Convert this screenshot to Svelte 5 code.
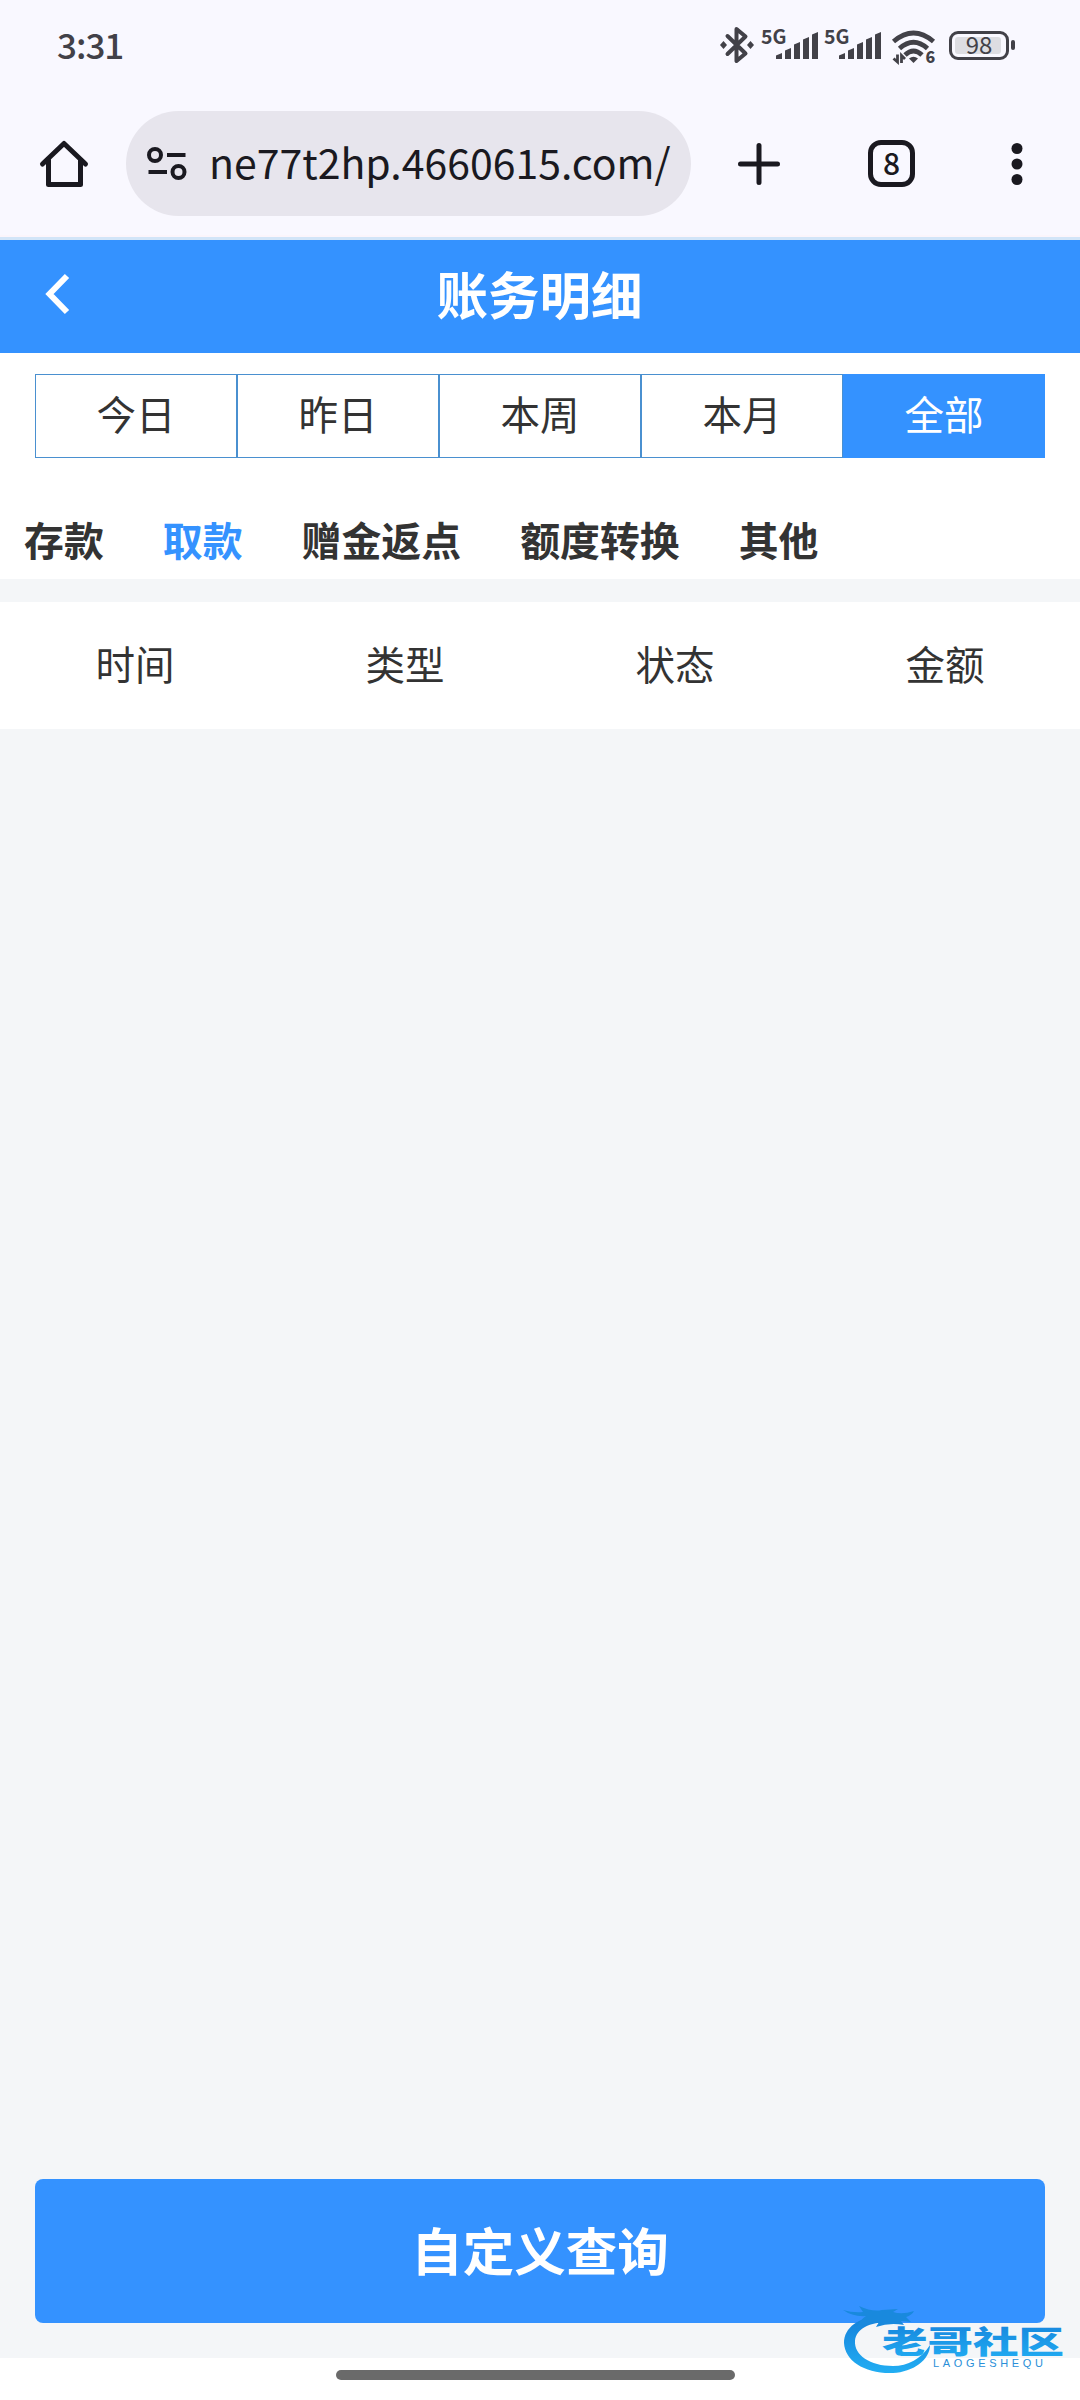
<script>
	let range = $state("全部");
	let category = $state("取款");

	const ranges = ["今日", "昨日", "本周", "本月", "全部"];
	const categories = ["存款", "取款", "赠金返点", "额度转换", "其他"];
	const columns = ["时间", "类型", "状态", "金额"];

	// Left edge and top of each signal bar, the bottom is shared
	const bars = [
		[14, 24],
		[23, 19],
		[32, 13],
		[41, 8],
		[50, 3],
	];
</script>

{#snippet signal()}
	<svg class="signal" width="58" height="32" viewBox="0 0 58 32">
		<text x="-1" y="15" class="net">5G</text>
		{#each bars as [x, y]}
			<path d="M{x} {y + 2.5}L{x + 6} {y}V30H{x}Z" />
		{/each}
	</svg>
{/snippet}

<div class="screen">
	<div class="status">
		<span class="clock">3:31</span>
		<div class="status-icons">
			<svg class="bt" width="34" height="38" viewBox="0 0 34 38">
				<path
					d="M7.5 10L25.5 27.5L16.5 35V3L25.5 10.5L7.5 28"
					class="line"
				/>
				<path d="M3.5 15L7 19L3.5 23L0 19ZM30.5 15L34 19L30.5 23L27 19Z" />
			</svg>
			{@render signal()}
			{@render signal()}
			<svg class="wifi" width="44" height="34" viewBox="0 0 44 34">
				<path d="M1.5 11.5Q21.5 -5.5 41.5 11.5" class="arc" />
				<path d="M7.5 18.5Q21.5 6 35.5 18.5" class="arc" />
				<path d="M13 25Q21.5 17 30 25" class="arc" />
				<path d="M17 28.5Q21.5 25 26 28.5L21.5 33Z" />
				<path d="M5.5 24.5V32L1.500 28.5M9.500 33V25.500L13 29" class="arrows" />
				<text x="33.500" y="33" class="gen">6</text>
			</svg>
			<svg class="battery" width="67" height="30" viewBox="0 0 67 30">
				<rect x="1.5" y="2.5" width="57" height="26" rx="7.5" class="shell" />
				<rect x="6" y="7" width="46" height="17" rx="3" class="charge" />
				<rect x="62" y="10" width="4" height="10" rx="2" />
				<text x="30" y="24" class="percent">98</text>
			</svg>
		</div>
	</div>

	<div class="browser">
		<svg class="home" width="48" height="48" viewBox="0 0 48 48">
			<path d="M2.5 24L24 3.5L45.5 24M8.500 20V44.5H40.500V20" />
		</svg>
		<div class="address">
			<svg width="40" height="34" viewBox="0 0 40 34">
				<circle cx="8" cy="8" r="6" />
				<circle cx="31.5" cy="25" r="6" />
				<path d="M20 8H38.5M1.5 25H20" />
			</svg>
			<span class="url">ne77t2hp.4660615.com/</span>
		</div>
		<svg class="plus" width="42" height="42" viewBox="0 0 42 42">
			<path d="M21 2.5V39.5M2.5 21H39.5" />
		</svg>
		<div class="tabs-count">8</div>
		<svg class="dots" width="12" height="44" viewBox="0 0 12 44">
			<circle cx="6" cy="6.5" r="5.5" />
			<circle cx="6" cy="22" r="5.5" />
			<circle cx="6" cy="37.5" r="5.5" />
		</svg>
	</div>

	<header>
		<svg class="back" width="26" height="42" viewBox="0 0 26 42">
			<path d="M22 3L4.5 21L22 39" />
		</svg>
		<h1>账务明细</h1>
	</header>

	<div class="filters">
		<div class="ranges">
			{#each ranges as item}
				<button class:active={item === range} onclick={() => (range = item)}>
					{item}
				</button>
			{/each}
		</div>
		<nav>
			{#each categories as item}
				<button
					class:active={item === category}
					onclick={() => (category = item)}
				>
					{item}
				</button>
			{/each}
		</nav>
	</div>

	<div class="columns">
		{#each columns as column}
			<span>{column}</span>
		{/each}
	</div>

	<main></main>

	<div class="footer">
		<button class="query">自定义查询</button>
	</div>
	<div class="gesture"><i></i></div>

	<svg class="mark" width="236" height="80" viewBox="836 2300 236 80">
		<defs>
			<linearGradient id="ink" x1="0" y1="0" x2="0" y2="1">
				<stop offset="0" stop-color="#1580da" />
				<stop offset="1" stop-color="#22aef3" />
			</linearGradient>
		</defs>
		<path
			d="M890 2317C862 2314 844 2326 844 2343C845 2361 865 2374 893 2373C913 2372 930 2360 930 2345C921 2359 908 2366 893 2366C870 2366 854 2355 855 2341C856 2329 869 2322 890 2322Z"
			fill="url(#ink)"
		/>
		<path
			d="M843 2310Q853 2313 863 2312L859 2306Q872 2312 882 2310L898 2309L893 2312Q902 2315 914 2311Q912 2315 906 2317L911 2322L901 2321L904 2325Q890 2322 876 2327L879 2322Q864 2324 855 2331Q859 2320 866 2316Q853 2317 843 2310Z"
			fill="#1989dd"
		/>
		<text
			x="882"
			y="2353"
			class="brand"
			textLength="182"
			lengthAdjust="spacingAndGlyphs">老哥社区</text
		>
		<text
			x="933"
			y="2367"
			class="latin"
			textLength="110"
			lengthAdjust="spacing">LAOGESHEQU</text
		>
	</svg>
</div>

<style>
	:global(body) {
		background: #fff;
	}

	.screen {
		position: relative;
		display: flex;
		flex-direction: column;
		width: 1080px;
		height: 2400px;
		overflow: hidden;
		background: #f4f6f8;
		color: #333;
		font-family: "Noto Sans CJK SC", "Noto Sans", sans-serif;
	}

	button {
		border: none;
		background: none;
		padding: 0;
		font: inherit;
		color: inherit;
		white-space: nowrap;
	}

	svg {
		flex: none;
		display: block;
		overflow: visible;
	}

	.status {
		display: flex;
		justify-content: space-between;
		height: 92px;
		padding: 0 64px 0 57px;
		background: #f9f8ff;
		color: #424148;
	}

	.clock {
		font-size: 35px;
		font-weight: 500;
		line-height: 88px;
		letter-spacing: -1px;
	}

	.status-icons {
		display: flex;
		align-items: flex-start;
		padding-top: 26px;
		fill: #424148;
	}

	.bt {
		margin-right: 1px;
	}

	.bt .line {
		fill: none;
		stroke: #424148;
		stroke-width: 4;
		stroke-linejoin: round;
		stroke-linecap: round;
	}

	.signal {
		margin: 3px -2px 0 7px;
	}

	.net {
		font-size: 19.5px;
		font-weight: 700;
	}

	.wifi {
		margin: 4px 0 0 11px;
	}

	.arc {
		fill: none;
		stroke: #424148;
		stroke-width: 4.8;
	}

	.arrows {
		fill: none;
		stroke: #424148;
		stroke-width: 2.8;
	}

	.gen {
		font-size: 16px;
		font-weight: 900;
	}

	.battery {
		margin: 4px 0 0 13px;
	}

	.shell {
		fill: none;
		stroke: #424148;
		stroke-width: 3;
	}

	.charge {
		fill: #dddde2;
	}

	.percent {
		font-size: 24px;
		text-anchor: middle;
	}

	.browser {
		display: flex;
		align-items: center;
		height: 145px;
		padding: 0 56px 0 40px;
		box-sizing: border-box;
		background: #f9f8ff;
		border-bottom: 2px solid #fbf5fb;
		color: #1a1920;
	}

	.browser path {
		fill: none;
		stroke: #1a1920;
		stroke-width: 5;
		stroke-linecap: round;
		stroke-linejoin: round;
	}

	.address {
		display: flex;
		align-items: center;
		width: 565px;
		height: 105px;
		margin-left: 38px;
		padding-left: 21px;
		border-radius: 53px;
		box-sizing: border-box;
		background: #e7e5ed;
	}

	.browser .address path {
		stroke-width: 4;
		stroke-linecap: butt;
	}

	.address circle {
		fill: none;
		stroke: #1a1920;
		stroke-width: 4;
	}

	.url {
		margin-left: 22px;
		padding-bottom: 5px;
		font-size: 41px;
		line-height: 60px;
	}

	.plus {
		margin-left: 47px;
	}

	.tabs-count {
		width: 47px;
		height: 47px;
		margin-left: 88px;
		box-sizing: border-box;
		border: 5px solid #1a1920;
		border-radius: 13px;
		font-size: 30px;
		font-weight: 500;
		line-height: 34px;
		text-align: center;
	}

	.dots {
		margin-left: 96px;
		fill: #1a1920;
	}

	header {
		display: flex;
		align-items: flex-start;
		height: 113px;
		padding: 0 45px;
		border-top: 3px solid #d2e5f8;
		background: #3492ff;
		color: #fff;
	}

	.back {
		margin-top: 33px;
	}

	.back path {
		fill: none;
		stroke: #fff;
		stroke-width: 6;
	}

	h1 {
		flex: 1;
		margin: 0 27px 0 0;
		font-size: 51.5px;
		font-weight: 700;
		line-height: 105px;
		text-align: center;
	}

	.filters {
		height: 226px;
		background: #fff;
	}

	.ranges {
		display: flex;
		padding: 21px 35px 0;
	}

	.ranges button {
		flex: 1;
		height: 84px;
		padding-bottom: 6px;
		border: 1px solid #4a90d0;
		font-size: 39.5px;
		line-height: 76px;
	}

	.ranges .active {
		background: #3492ff;
		border-color: #3492ff;
		color: #fff;
	}

	nav {
		display: flex;
		gap: 59px;
		padding: 51px 24px 0;
		font-size: 39.9px;
		font-weight: 700;
		line-height: 60px;
	}

	nav .active {
		color: #3492ff;
	}

	.columns {
		display: grid;
		grid-template-columns: repeat(4, 1fr);
		height: 127px;
		margin-top: 23px;
		background: #fff;
		font-size: 39.5px;
		line-height: 122px;
		text-align: center;
	}

	main {
		flex: 1;
	}

	.footer {
		padding: 0 35px 35px;
	}

	.query {
		display: block;
		width: 1010px;
		height: 144px;
		padding-bottom: 5px;
		border-radius: 8px;
		background: #3492ff;
		color: #fff;
		font-size: 51.5px;
		font-weight: 700;
		line-height: 138px;
	}

	.gesture {
		height: 42px;
		background: #fff;
	}

	.gesture i {
		display: block;
		width: 399px;
		height: 10px;
		margin: 12px 0 0 336px;
		border-radius: 5px;
		background: #6a6a6a;
	}

	.mark {
		position: absolute;
		left: 836px;
		top: 2300px;
	}

	.brand {
		fill: url(#ink);
		font-size: 31px;
		font-weight: 900;
	}

	.latin {
		fill: #2a8fd8;
		font-family: "Liberation Sans", sans-serif;
		font-size: 11px;
	}
</style>
